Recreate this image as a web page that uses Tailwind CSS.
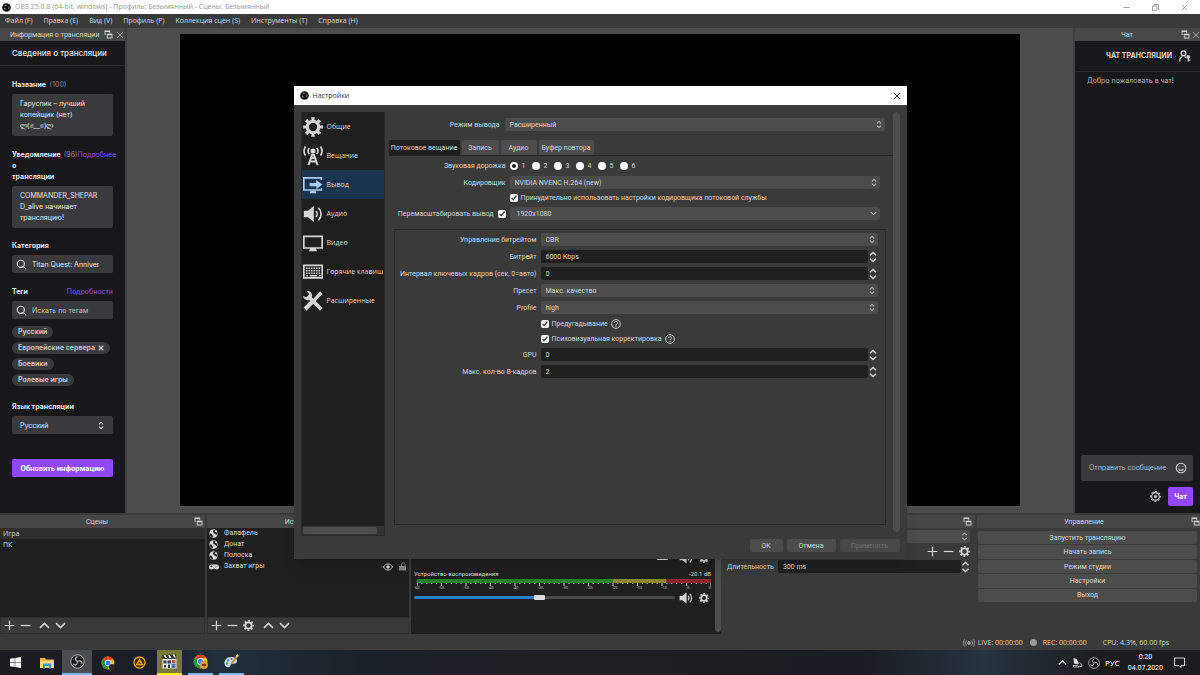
<!DOCTYPE html>
<html lang="ru">
<head>
  <meta charset="UTF-8" />
  <meta name="viewport" content="width=device-width, initial-scale=1.0" />
  <title>OBS 25.0.8 - Настройки</title>
  <script src="https://cdn.jsdelivr.net/npm/@tailwindcss/browser@4"></script>
</head>
<body class="relative flex min-h-screen flex-col overflow-x-hidden bg-[#3a3a3a] font-['Open_Sans','Noto_Sans',sans-serif] text-[7px] leading-[10px] text-[#d6d6d6]">

  <!-- Icon sprite -->
  <svg class="hidden" aria-hidden="true">
    <symbol id="i-obs" viewBox="0 0 24 24">
      <circle cx="12" cy="12" r="11.5" fill="#111" />
      <g fill="#777">
        <path d="M11 3.5a5 5 0 0 0-3.6 6.6 5.4 5.4 0 0 1 5.4-2.2A4.6 4.6 0 0 0 11 3.5z" />
        <path d="M4.5 16a5 5 0 0 0 7.4-.2 5.4 5.4 0 0 1-4.6-3.6A4.6 4.6 0 0 0 4.5 16z" />
        <path d="M20 15.5a5 5 0 0 0-3.5-6.5 5.4 5.4 0 0 1-.8 5.8 4.6 4.6 0 0 0 4.3.7z" />
      </g>
    </symbol>
    <symbol id="i-obs-line" viewBox="0 0 24 24">
      <circle cx="12" cy="12" r="10.8" fill="#1c1c1e" stroke="#c4c4c4" stroke-width="1.4" />
      <g fill="none" stroke="#b8b8b8" stroke-width="2" stroke-linecap="round">
        <path d="M11.500 4.500c-3 1-3.500 4-1.500 6.300" />
        <path d="M5.700 16.200c2.500 2 5.300.9 6.200-2.100" />
        <path d="M19 15.300c.5-3.100-1.800-5-4.900-4.300" />
      </g>
      <circle cx="12" cy="12" r="1.600" fill="#b8b8b8" />
    </symbol>
    <symbol id="i-gear" viewBox="0 0 24 24">
      <circle cx="12" cy="12" r="6.900" fill="none" stroke="currentColor" stroke-width="3.800" />
      <circle cx="12" cy="12" r="10" fill="none" stroke="currentColor" stroke-width="3.600" pathLength="16" stroke-dasharray="1 1" stroke-dashoffset=".5" />
    </symbol>
    <symbol id="i-popout" viewBox="0 0 16 16">
      <path d="M1 1h10v2.500H1zM1 3h1.500v5H1zM1 7h3v1.500H1zM9.500 3H11v3H9.500z" fill="currentColor" />
      <path d="M5 6.500h10V15H5zm1.500 3v4h7v-4z" fill="currentColor" fill-rule="evenodd" />
    </symbol>
    <symbol id="i-x" viewBox="0 0 16 16"><path d="M2 2l12 12M14 2L2 14" stroke="currentColor" stroke-width="1.800" fill="none" /></symbol>
    <symbol id="i-plus" viewBox="0 0 16 16"><path d="M8 1v14M1 8h14" stroke="currentColor" stroke-width="1.800" /></symbol>
    <symbol id="i-minus" viewBox="0 0 16 16"><path d="M1 8h14" stroke="currentColor" stroke-width="1.800" /></symbol>
    <symbol id="i-up" viewBox="0 0 16 16"><path d="M1.500 11.500L8 5l6.500 6.500" stroke="currentColor" stroke-width="2.200" fill="none" /></symbol>
    <symbol id="i-down" viewBox="0 0 16 16"><path d="M1.500 4.500L8 11l6.500-6.500" stroke="currentColor" stroke-width="2.200" fill="none" /></symbol>
    <symbol id="i-updown" viewBox="0 0 10 14"><path d="M1.500 5L5 1.800 8.500 5M1.500 9L5 12.200 8.500 9" stroke="currentColor" stroke-width="1.700" fill="none" /></symbol>
    <symbol id="i-speaker" viewBox="0 0 24 20">
      <path d="M1 6h5l7-5.500v19L6 14H1z" fill="currentColor" />
      <path d="M15.500 6.500a5 5 0 0 1 0 7M18.500 2.500a10.500 10.500 0 0 1 0 15" stroke="currentColor" stroke-width="2" fill="none" />
    </symbol>
    <symbol id="i-globe" viewBox="0 0 16 16">
      <circle cx="8" cy="8" r="7.500" fill="#dcdcdc" />
      <path d="M8.500 1l3 .8-1 2.700 2.500 1.500 2-.5.3 3.500-2.800 1.500-1.500-2-2.500-1-1.500-3zM1 7.500l3.500 1 1.500 2.500 1.500 1-.5 3-2.500-1L1.500 11z" fill="#1f1f1f" />
    </symbol>
    <symbol id="i-search" viewBox="0 0 16 16"><circle cx="7" cy="7" r="5.200" fill="none" stroke="currentColor" stroke-width="1.600" /><path d="M10.800 10.800L15 15" stroke="currentColor" stroke-width="1.600" /></symbol>
    <symbol id="i-help" viewBox="0 0 16 16">
      <circle cx="8" cy="8" r="7" fill="none" stroke="currentColor" stroke-width="1.500" />
      <path d="M5.600 6.400a2.400 2.400 0 1 1 3.700 2c-.9.600-1.300.9-1.300 1.800M8 11.300v1.600" fill="none" stroke="currentColor" stroke-width="1.500" />
    </symbol>
    <symbol id="i-chrome" viewBox="0 0 24 24">
      <circle cx="12" cy="12" r="11" fill="#fbc116" />
      <path d="M12 12L2.500 6.500A11 11 0 0 1 21.500 6.500H12z" fill="#e33b2e" />
      <path d="M2.500 6.500A11 11 0 0 0 11 23l5-9-4-2z" fill="#229342" />
      <circle cx="12" cy="12" r="5.500" fill="#fff" />
      <circle cx="12" cy="12" r="4.200" fill="#3b7ded" />
    </symbol>
  </svg>

  <!-- Window title -->
  <header class="flex h-[14px] items-center bg-white pr-3 pl-[2px] text-[#999]">
    <svg class="mr-1 size-[9px]"><use href="#i-obs" /></svg>
    <h1 class="flex-1">OBS 25.0.8 (64-bit, windows) - Профиль: Безымянный - Сцены: Безымянный</h1>
    <div class="flex items-center gap-[22px] text-[#8a8a8a]">
      <button aria-label="Свернуть"><svg class="size-[7px]"><use href="#i-minus" /></svg></button>
      <button aria-label="Развернуть"><svg class="size-[7px]" viewBox="0 0 14 14" fill="none" stroke="currentColor" stroke-width="1.500"><path d="M1 4h9v9H1zM4 4V1h9v9h-3" /></svg></button>
      <button aria-label="Закрыть"><svg class="size-[7px]"><use href="#i-x" /></svg></button>
    </div>
  </header>

  <nav class="flex h-[14px] items-center gap-[11px] px-[5px]">
    <a href="#">Файл (F)</a>
    <a href="#">Правка (E)</a>
    <a href="#">Вид (V)</a>
    <a href="#">Профиль (P)</a>
    <a href="#">Коллекция сцен (S)</a>
    <a href="#">Инструменты (T)</a>
    <a href="#">Справка (H)</a>
  </nav>

  <main class="flex flex-1 bg-[#4c4c4c]">
    <!-- Stream info -->
    <aside class="flex w-[125px] flex-col bg-[#18181b]">
      <div class="flex h-[13px] items-center gap-[3px] bg-[#484848] pr-px pl-[10px] font-[Roboto,sans-serif]">
        <h2 class="flex-1 whitespace-nowrap">Информация о трансляции</h2>
        <svg class="size-[9px]"><use href="#i-popout" /></svg>
        <svg class="size-[8px] text-[#aaa]"><use href="#i-x" /></svg>
      </div>
      <form class="flex flex-col font-[Inter,Roboto,sans-serif] text-[7px] leading-[11px] text-[#e6e6e9]">
        <h3 class="h-[25px] border-b border-[#2c2c30] px-[12px] text-[8px] leading-[25px] font-medium whitespace-nowrap">Сведения о трансляции</h3>
        <div class="flex flex-col px-[12px] pt-[13px]">
          <label for="name" class="mb-1 font-bold">Название <span class="pl-[2px] font-normal text-[#8a8a90]">(100)</span></label>
          <textarea id="name" class="h-[42px] w-full resize-none overflow-hidden rounded-[2px] bg-[#3a3a3d] px-[8px] py-[4px]">Гаруспик – лучший копейщик (нет) ლ(ಠ__ಠ)ლ</textarea>

          <div class="mt-[13px] mb-1 flex h-[33px] whitespace-nowrap">
            <label for="notify" class="font-bold">Уведомление<br />о<br />трансляции</label>
            <span class="pl-[3px] text-[#8a8a90]">(96)</span>
            <a href="#" class="text-[#8a4ae8]">Подробнее</a>
          </div>
          <textarea id="notify" class="h-[42px] w-full resize-none overflow-hidden rounded-[2px] bg-[#3a3a3d] py-[4px] pr-[13px] pl-[8px] wrap-break-word">COMMANDER_SHEPARD_alive начинает трансляцию!</textarea>

          <label for="cat" class="mt-[12px] mb-1 font-bold">Категория</label>
          <div class="flex h-[18px] items-center gap-[5px] rounded-[2px] bg-[#3a3a3d] px-[4px]">
            <svg class="size-[11px] shrink-0"><use href="#i-search" /></svg>
            <input id="cat" value="Titan Quest: Anniversary Edition" class="mr-[10px] min-w-0 flex-1 outline-none" />
          </div>

          <div class="mt-[13px] mb-1 flex justify-between">
            <label for="tags" class="font-bold">Теги</label>
            <a href="#" class="text-[#8a4ae8]">Подробности</a>
          </div>
          <div class="flex h-[18px] items-center gap-[5px] rounded-[2px] bg-[#3a3a3d] px-[4px]">
            <svg class="size-[11px] shrink-0"><use href="#i-search" /></svg>
            <input id="tags" placeholder="Искать по тегам" class="min-w-0 flex-1 outline-none placeholder:text-[#c0c0c4]" />
          </div>
          <ul class="mt-[7px] flex flex-col items-start gap-1 leading-[12px] font-semibold whitespace-nowrap text-[#cfcfd3]">
            <li class="rounded-full bg-[#3a3a3d] px-[6px]">Русский</li>
            <li class="flex items-center gap-[3px] rounded-full bg-[#3a3a3d] px-[6px]">Европейские сервера <svg class="size-[6px]" viewBox="0 0 16 16"><path d="M2 2l12 12M14 2L2 14" stroke="currentColor" stroke-width="3" /></svg></li>
            <li class="rounded-full bg-[#3a3a3d] px-[6px]">Боевики</li>
            <li class="rounded-full bg-[#3a3a3d] px-[6px]">Ролевые игры</li>
          </ul>

          <label for="lang" class="mt-[15px] mb-1 font-bold">Язык трансляции</label>
          <div class="relative">
            <select id="lang" class="h-[18px] w-full appearance-none rounded-[2px] bg-[#3a3a3d] px-[8px]"><option>Русский</option></select>
            <svg class="pointer-events-none absolute top-[5px] right-[9px] h-[9px] w-[6px]"><use href="#i-updown" /></svg>
          </div>
          <button type="button" class="mt-[25px] h-[18px] rounded-[2px] bg-[#9147ff] font-bold whitespace-nowrap text-white">Обновить информацию</button>
        </div>
      </form>
    </aside>

    <!-- Preview -->
    <section class="flex flex-1 border-x-2 border-[#404040] px-[53px] pt-[6px] pb-[7px]" aria-label="Предпросмотр">
      <div class="flex-1 bg-black"></div>
    </section>

    <!-- Chat -->
    <aside class="flex w-[125px] flex-col bg-[#18181b]">
      <div class="flex h-[13px] items-center gap-[2px] bg-[#484848] font-[Roboto,sans-serif]">
        <h2 class="flex-1 text-center">Чат</h2>
        <svg class="size-[9px]"><use href="#i-popout" /></svg>
        <svg class="size-[8px] text-[#aaa]"><use href="#i-x" /></svg>
      </div>
      <div class="flex flex-1 flex-col font-[Inter,Roboto,sans-serif] text-[7px]">
        <div class="flex h-[31px] items-center justify-end gap-[7px] border-b border-[#2c2c30] pr-[9px]">
          <h3 class="font-bold whitespace-nowrap">ЧАТ ТРАНСЛЯЦИИ</h3>
          <svg class="size-[12px]" viewBox="0 0 20 20" fill="none" stroke="currentColor" stroke-width="2"><circle cx="7.500" cy="5.500" r="4" /><path d="M5 9v2.500l-3.500 3V19M10 9v2.500l2.500 2" /><circle cx="15.500" cy="11.500" r="2" fill="currentColor" /><path d="M15.500 13v6M15.500 17H19" /></svg>
        </div>
        <p class="flex-1 px-3 pt-1 text-[#adadb8]">Добро пожаловать в чат!</p>
        <div class="mr-[7px] ml-[6px] flex h-[26px] items-center rounded-[2px] bg-[#3a3a3d] pr-[6px] pl-[8px]">
          <input aria-label="Отправить сообщение" placeholder="Отправить сообщение" class="min-w-0 flex-1 outline-none placeholder:text-[#b8b8bc]" />
          <svg class="size-[12px]" viewBox="0 0 20 20" fill="none" stroke="currentColor" stroke-width="1.800"><circle cx="10" cy="10" r="8" /><path d="M6 11c1 4 7 4 8 0M7 7v1.500M13 7v1.500" /></svg>
        </div>
        <div class="flex items-center justify-end gap-[7px] pt-[6px] pr-[7px] pb-[7px]">
          <button aria-label="Настройки чата"><svg class="size-[11px]" viewBox="0 0 20 20" fill="none" stroke="currentColor"><circle cx="10" cy="10" r="7" stroke-width="2" /><circle cx="10" cy="10" r="8.800" stroke-width="2" pathLength="16" stroke-dasharray="1 1" stroke-dashoffset=".5" /><circle cx="10" cy="10" r="2.300" fill="currentColor" /></svg></button>
          <button class="h-[19px] w-[25px] rounded-[2px] bg-[#9147ff] font-bold text-white">Чат</button>
        </div>
      </div>
    </aside>
  </main>

  <!-- Docks -->
  <div class="grid h-[121px] grid-cols-[205fr_202fr_310fr_252fr_223fr] gap-[2px] pt-[2px] font-[Roboto,sans-serif]">
    <section class="flex flex-col">
      <div class="flex h-[13px] items-center bg-[#464646] pr-[2px]">
        <h2 class="flex-1 text-center">Сцены</h2>
        <svg class="size-[9px]"><use href="#i-popout" /></svg>
      </div>
      <ul class="flex-1 bg-[#1f1f1f] leading-[11px] font-['Open_Sans',sans-serif]">
        <li class="bg-[#2f2f2f] px-[3px]">Игра</li>
        <li class="px-[3px]">ПК</li>
      </ul>
      <div class="flex h-[17px] items-center gap-[5px] border border-[#303030] px-[3px]">
        <button aria-label="Добавить"><svg class="size-[11px]"><use href="#i-plus" /></svg></button>
        <button aria-label="Удалить"><svg class="size-[11px]"><use href="#i-minus" /></svg></button>
        <button class="pl-[3px]" aria-label="Вверх"><svg class="size-[11px]"><use href="#i-up" /></svg></button>
        <button aria-label="Вниз"><svg class="size-[11px]"><use href="#i-down" /></svg></button>
      </div>
    </section>

    <section class="flex flex-col">
      <div class="flex h-[13px] items-center bg-[#464646] pr-[2px]">
        <h2 class="flex-1 text-center">Источники</h2>
        <svg class="size-[9px]"><use href="#i-popout" /></svg>
      </div>
      <ul class="flex-1 bg-[#1f1f1f] px-[2px] leading-[11px]">
        <li class="flex items-center gap-[6px]"><svg class="size-[9px]"><use href="#i-globe" /></svg>Фалафель</li>
        <li class="flex items-center gap-[6px]"><svg class="size-[9px]"><use href="#i-globe" /></svg>Донат</li>
        <li class="flex items-center gap-[6px]"><svg class="size-[9px]"><use href="#i-globe" /></svg>Полоска</li>
        <li class="flex items-center gap-[5px]">
          <svg class="h-[6px] w-[10px]" viewBox="0 0 20 12"><path d="M5 1h10a5 5 0 0 1 0 10c-2 0-3-2-5-2s-3 2-5 2A5 5 0 0 1 5 1z" fill="#dcdcdc" /><path d="M3 5h4M5 3v4M13 6.500h1.500M15.500 4H17" stroke="#1f1f1f" stroke-width="1.500" /></svg>
          <span class="flex-1">Захват игры</span>
          <svg class="h-[8px] w-[10px]" viewBox="0 0 20 16" fill="none" stroke="currentColor" stroke-width="2"><path d="M1 8c4-8 14-8 18 0-4 8-14 8-18 0z" /><circle cx="10" cy="8" r="2.500" fill="currentColor" /></svg>
          <svg class="size-[9px] text-[#888]" viewBox="0 0 18 18"><path d="M2 8h14v9H2z" fill="currentColor" /><path d="M7 8V5a3.500 3.500 0 0 1 7 0v3" fill="none" stroke="currentColor" stroke-width="2" /></svg>
        </li>
      </ul>
      <div class="flex h-[17px] items-center gap-[5px] border border-[#303030] px-[3px]">
        <button aria-label="Добавить"><svg class="size-[11px]"><use href="#i-plus" /></svg></button>
        <button aria-label="Удалить"><svg class="size-[11px]"><use href="#i-minus" /></svg></button>
        <button aria-label="Свойства"><svg class="size-[11px]"><use href="#i-gear" /></svg></button>
        <button class="pl-[4px]" aria-label="Вверх"><svg class="size-[11px]"><use href="#i-up" /></svg></button>
        <button aria-label="Вниз"><svg class="size-[11px]"><use href="#i-down" /></svg></button>
      </div>
    </section>

    <section class="flex flex-col">
      <h2 class="h-[13px] bg-[#464646] text-center leading-[13px]">Микшер аудио</h2>
      <div class="flex flex-1 bg-[#1f1f1f]">
        <div id="mixer" class="flex-1 pr-[4px] pl-[3px]"></div>
        <div class="mb-[2px] w-[6px] rounded-full bg-[#4d4d4d]"></div>
      </div>
    </section>

    <section class="flex flex-col">
      <div class="flex h-[13px] items-center bg-[#464646] pr-[3px]">
        <h2 class="flex-1 text-center">Переходы между сценами</h2>
        <svg class="size-[9px]"><use href="#i-popout" /></svg>
      </div>
      <div class="flex flex-col pt-[2px] pr-[5px] pl-[4px]">
        <div class="relative">
          <select aria-label="Переход" class="block h-[13px] w-full appearance-none rounded-[2px] bg-[#4c4c4c] px-[5px]"><option>Затухание</option></select>
          <svg class="pointer-events-none absolute top-[2px] right-[2px] h-[9px] w-[7px] text-[#aaa]"><use href="#i-updown" /></svg>
        </div>
        <div class="flex h-[17px] items-center justify-end gap-[5px]">
          <button aria-label="Добавить переход"><svg class="size-[11px]"><use href="#i-plus" /></svg></button>
          <button aria-label="Удалить переход"><svg class="size-[11px]"><use href="#i-minus" /></svg></button>
          <button aria-label="Свойства перехода"><svg class="size-[11px]"><use href="#i-gear" /></svg></button>
        </div>
        <div class="flex h-[13px] items-center">
          <label for="dur" class="mr-1">Длительность</label>
          <input id="dur" value="300 ms" class="h-[13px] min-w-0 flex-1 rounded-[2px] bg-[#1f1f1f] px-[5px] outline-none" />
          <svg class="h-[12px] w-[9px]"><use href="#i-updown" /></svg>
        </div>
      </div>
    </section>

    <section class="flex flex-col">
      <div class="flex h-[13px] items-center bg-[#464646]">
        <h2 class="flex-1 text-center">Управление</h2>
        <svg class="size-[9px]"><use href="#i-popout" /></svg>
      </div>
      <div class="flex h-[74px] flex-col gap-px pt-[3px] pr-[3px] pl-px">
        <button class="flex-1 rounded-[2px] bg-[#4c4c4c]">Запустить трансляцию</button>
        <button class="flex-1 rounded-[2px] bg-[#4c4c4c]">Начать запись</button>
        <button class="flex-1 rounded-[2px] bg-[#4c4c4c]">Режим студии</button>
        <button class="flex-1 rounded-[2px] bg-[#4c4c4c]">Настройки</button>
        <button class="flex-1 rounded-[2px] bg-[#4c4c4c]">Выход</button>
      </div>
    </section>
  </div>

  <!-- Status bar -->
  <div class="flex h-[16px] items-center justify-end pt-px pr-[31px]">
    <svg class="mr-[3px] h-[8px] w-[12px] text-[#999]" viewBox="0 0 24 16" fill="none" stroke="currentColor" stroke-width="2"><circle cx="12" cy="8" r="3" fill="currentColor" /><path d="M7 3a7 7 0 0 0 0 10M17 3a7 7 0 0 1 0 10M3 1a11 11 0 0 0 0 14M21 1a11 11 0 0 1 0 14" /></svg>
    <span>LIVE: 00:00:00</span>
    <span class="mr-[6px] ml-[7px] size-[7px] rounded-full bg-[#999]"></span>
    <span>REC: 00:00:00</span>
    <span class="ml-4">CPU: 4.3%, 60.00 fps</span>
  </div>

  <!-- Taskbar -->
  <footer class="flex h-[25px] items-stretch bg-[linear-gradient(to_right,#1b1c20_0%,#1b1f27_13%,#22303b_18%,#1b2129_30%,#1e1f24_45%,#1a1d23_72%,#27333f_82%,#1c1c1e_92%)] px-px text-white">
    <button class="flex w-[28px] items-center justify-center" aria-label="Пуск"><svg class="size-[11px]" viewBox="0 0 20 20" fill="#fff"><path d="M0 3l8.500-1.200V9.500H0zM9.500 1.600L20 0v9.500H9.500zM0 10.500h8.500v7.700L0 17zM9.500 10.500H20V20L9.500 18.400z" /></svg></button>
    <button class="ml-1 flex w-[28px] items-center justify-center" aria-label="Проводник"><svg class="h-[12px] w-[14px]" viewBox="0 0 28 24"><path d="M0 2h10l2 3h16v17H0z" fill="#e9b440" /><path d="M0 8h28v14H0z" fill="#fbdc72" /><path d="M6 13h16v10h-4v-5h-8v5H6z" fill="#3d97dc" /></svg></button>
    <button class="ml-px flex w-[30px] items-center justify-center border-b-2 border-[#76b9ed] bg-[#4a4c50]" aria-label="OBS"><svg class="size-[15px]"><use href="#i-obs-line" /></svg></button>
    <button class="ml-px flex w-[30px] items-center justify-center" aria-label="Chrome"><svg class="size-[14px]"><use href="#i-chrome" /><circle cx="11" cy="11" r="3" fill="#332826" /></svg></button>
    <button class="ml-px flex w-[30px] items-center justify-center" aria-label="AIMP"><svg class="size-[13px]" viewBox="0 0 24 24"><circle cx="12" cy="12" r="11.500" fill="#f6a11a" /><circle cx="12" cy="12" r="9" fill="#3a2c16" /><path d="M12 4l7.500 13h-15zm0 5.500l-3 5h6z" fill="#f6a11a" fill-rule="evenodd" /></svg></button>
    <button class="ml-[3px] flex w-[25px] items-center justify-center border-b-2 border-[#f6ee1a] bg-[#77783a]" aria-label="Видеоплеер"><svg class="size-[15px]" viewBox="0 0 30 30"><path d="M1 10h28v19H1z" fill="#eee" /><path d="M1 2l27-1v8H1z" fill="#222" /><path d="M3 2h4l3 6H6zM12 2h4l3 6h-4zM21 1h4l3 6h-4z" fill="#fff" /><path d="M3 13h6v6H3zM11 13h7v6h-7zM4 22h4v5H4zM12 21h4v7h-4z" fill="#35394a" /><path d="M20 12h7v6h-7z" fill="#bb5548" /><path d="M19 19h8v9h-8z" fill="#4a70b8" /></svg></button>
    <button class="ml-[6px] flex w-[25px] items-center justify-center border-b-2 border-[#76b9ed]" aria-label="Chrome"><svg class="size-[15px]"><use href="#i-chrome" /><circle cx="11" cy="11" r="4" fill="#d99a3c" /><path d="M9 10h4v2H9z" fill="#71401d" /></svg></button>
    <button class="ml-[6px] flex w-[25px] items-center justify-center border-b-2 border-[#76b9ed]" aria-label="Paint"><svg class="size-[15px]" viewBox="0 0 30 30"><path d="M14 6C5 6 0 13 1 20c1 6 8 8 11 5 2-2 0-4 3-5 4-1 11 0 11-6 0-5-5-8-12-8z" fill="#c5dff0" /><circle cx="8" cy="13" r="2.500" fill="#3d87d6" /><circle cx="6" cy="19" r="2.500" fill="#49a64b" /><circle cx="15" cy="10" r="2.200" fill="#d8483c" /><path d="M13 19L25 3l3 2-12 16z" fill="#c98a3f" /><path d="M23 4l4-4 3 4-4 3z" fill="#e8c78c" /></svg></button>
    <div class="ml-auto flex items-center pr-[14px]">
      <svg class="size-[9px]"><use href="#i-up" /></svg>
      <svg class="ml-[5px] size-[11px]" viewBox="0 0 22 22"><path d="M3 2c6 1 11 6 10 13l-9-2zM10 10l5 4" fill="#ddd" /><path d="M2 17h9l3 3H3zM15 11c3 1 5 4 5 8h-6" fill="none" stroke="#ddd" stroke-width="1.500" /></svg>
      <svg class="ml-[5px] size-[12px]"><use href="#i-obs-line" /></svg>
      <span class="ml-[5px] text-[8px]">РУС</span>
      <time class="ml-2 text-center font-[Roboto,sans-serif] text-[7px] leading-[11px]">0:20<br />04.07.2020</time>
      <svg class="ml-[11px] size-[11px]" viewBox="0 0 22 22" fill="none" stroke="#fff" stroke-width="1.600"><path d="M1 2h20v15h-7v4l-4-4H1z" /></svg>
    </div>
  </footer>

  <!-- Settings dialog -->
  <section role="dialog" aria-labelledby="dlg" class="absolute inset-x-0 top-[86px] mx-auto flex h-[473px] w-[613px] flex-col bg-[#3a3a3a] shadow-lg">
    <div class="flex h-[19px] items-center bg-white px-[6px] text-[#333]">
      <svg class="mr-[4px] size-[9px]"><use href="#i-obs" /></svg>
      <h2 id="dlg" class="flex-1">Настройки</h2>
      <button aria-label="Закрыть"><svg class="size-[8px]"><use href="#i-x" /></svg></button>
    </div>

    <div class="flex min-h-0 flex-1 pt-[7px] pr-[7px] pl-[7px]">
      <div class="flex h-[424px] w-[84px] flex-col border-x border-b border-[#2a2a2a] bg-[#1f1f1f]">
        <ul class="flex-1 whitespace-nowrap">
          <li><a href="#" class="flex h-[29px] items-center gap-[4px] px-px"><svg class="size-[20px] shrink-0"><use href="#i-gear" /></svg>Общие</a></li>
          <li><a href="#" class="flex h-[29px] items-center gap-[4px] px-px"><svg class="size-[20px] shrink-0" viewBox="0 0 24 24" fill="none" stroke="currentColor" stroke-width="2"><circle cx="12" cy="6" r="2" fill="currentColor" /><path d="M7.500 2.500a5.500 5.500 0 0 0 0 7M16.500 2.500a5.500 5.500 0 0 1 0 7M3 .5a10 10 0 0 0 0 11M21 .5a10 10 0 0 1 0 11" /><path d="M6.500 23L11 10.500h2L17.500 23M8.500 18.500h7M10 14.500h4" stroke-width="2.400" /></svg>Вещание</a></li>
          <li><a href="#" class="flex h-[29px] items-center gap-[4px] bg-[#1b3550] px-px"><svg class="size-[20px] shrink-0 text-[#a9cbed]" viewBox="0 0 24 24" fill="none" stroke="currentColor" stroke-width="2"><path d="M22 6V3.500H1V18h21v-2" /><path d="M8 9.500h8V6l7 5.500-7 5.500v-3.500H8z" fill="currentColor" stroke="none" /><path d="M8 22h8l-1-3H9z" fill="currentColor" stroke="none" /></svg>Вывод</a></li>
          <li><a href="#" class="flex h-[29px] items-center gap-[4px] px-px"><svg class="size-[20px] shrink-0"><use href="#i-speaker" /></svg>Аудио</a></li>
          <li><a href="#" class="flex h-[29px] items-center gap-[4px] px-px"><svg class="size-[20px] shrink-0" viewBox="0 0 24 24"><path d="M0 3h24v16H0zm2 2v12h20V5z" fill="currentColor" fill-rule="evenodd" /><path d="M9 18h6l2 4H7z" fill="currentColor" /></svg>Видео</a></li>
          <li><a href="#" class="flex h-[29px] items-center gap-[4px] px-px"><svg class="size-[20px] shrink-0" viewBox="0 0 24 24" fill="none" stroke="currentColor"><path d="M1 4h22v15H1z" stroke-width="2" /><path d="M3.500 7.500h17M3.500 10.500h17M3.500 13.500h17" stroke-width="2" stroke-dasharray="2 1" /><path d="M4 16.500h2M8 16.500h9M19 16.500h2" stroke-width="2" /></svg>Горячие клавиш</a></li>
          <li><a href="#" class="flex h-[29px] items-center gap-[4px] px-px"><svg class="size-[20px] shrink-0" viewBox="0 0 24 24" fill="none" stroke="currentColor"><path d="M22 2L13 11.500" stroke-width="4" /><path d="M11.500 12.500L2.500 21.500" stroke-width="5" /><path d="M7 7l15 15" stroke-width="4.500" /><path d="M5 0a5.500 5.500 0 1 1-5 6l4 1.500L7.500 4z" fill="currentColor" stroke="none" /></svg>Расширенные</a></li>
        </ul>
        <div class="h-[9px] bg-[#333] py-px pr-[7px] pl-px"><div class="h-full rounded-[2px] bg-[#4d4d4d]"></div></div>
      </div>

      <form class="ml-1 flex min-w-0 flex-1 flex-col pt-[6px] font-[Roboto,sans-serif]">
        <div class="flex h-[13px] items-center pr-[8px]">
          <label for="mode" class="w-[116px] pr-[5px] text-right">Режим вывода</label>
          <div class="relative flex-1">
            <select id="mode" class="block h-[13px] w-full appearance-none rounded-[2px] bg-[#4c4c4c] px-[5px]"><option>Расширенный</option></select>
            <svg class="pointer-events-none absolute top-[2px] right-[3px] h-[9px] w-[6px] text-[#bbb]"><use href="#i-updown" /></svg>
          </div>
        </div>

        <div class="mt-[9px] flex h-[16px] items-stretch gap-[2px] border-b border-[#222] whitespace-nowrap" role="tablist">
          <button type="button" role="tab" aria-selected="true" class="w-[71px] rounded-t-[2px] bg-[#1f1f1f]">Потоковое вещание</button>
          <button type="button" role="tab" class="w-[37px] rounded-t-[2px] bg-[#4c4c4c]">Запись</button>
          <button type="button" role="tab" class="w-[36px] rounded-t-[2px] bg-[#4c4c4c]">Аудио</button>
          <button type="button" role="tab" class="w-[55px] rounded-t-[2px] bg-[#4c4c4c]">Буфер повтора</button>
        </div>

        <div class="flex flex-col pt-[5px] pr-[13px]">
          <fieldset class="flex h-[13px] items-center">
            <span class="w-[121px] pr-[4px] text-right">Звуковая дорожка</span>
            <div id="tracks" class="flex items-center"></div>
          </fieldset>
          <div class="mt-[2px] flex h-[13px] items-center">
            <label for="enc" class="w-[121px] pr-[4px] text-right">Кодировщик</label>
            <div class="relative flex-1">
              <select id="enc" class="block h-[13px] w-full appearance-none rounded-[2px] bg-[#4c4c4c] px-[5px]"><option>NVIDIA NVENC H.264 (new)</option></select>
              <svg class="pointer-events-none absolute top-[2px] right-[3px] h-[9px] w-[6px] text-[#bbb]"><use href="#i-updown" /></svg>
            </div>
          </div>
          <label class="mt-[2px] flex h-[13px] items-center gap-[3px] pl-[121px]"><input type="checkbox" checked class="size-[8px] accent-white" />Принудительно использовать настройки кодировщика потоковой службы</label>
          <div class="mt-[3px] flex h-[13px] items-center">
            <label class="flex w-[121px] items-center justify-end gap-[4px] pr-[4px]">Перемасштабировать вывод<input type="checkbox" checked class="size-[8px] accent-white" /></label>
            <div class="relative flex-1">
              <select aria-label="Разрешение" class="block h-[13px] w-full appearance-none rounded-[2px] bg-[#4c4c4c] px-[7px]"><option>1920x1080</option></select>
              <svg class="pointer-events-none absolute top-[3px] right-[3px] size-[7px]"><use href="#i-down" /></svg>
            </div>
          </div>
        </div>

        <div class="mt-[9px] mr-[7px] ml-[5px] flex h-[296px] flex-col gap-[4px] border border-[#292929] pt-[3px] pr-[7px]">
          <div class="flex h-[13px] items-center">
            <label for="rate" class="w-[146px] pr-[4px] text-right">Управление битрейтом</label>
            <div class="relative flex-1">
              <select id="rate" class="block h-[13px] w-full appearance-none rounded-[2px] bg-[#4c4c4c] px-[5px]"><option>CBR</option></select>
              <svg class="pointer-events-none absolute top-[2px] right-[3px] h-[9px] w-[6px] text-[#bbb]"><use href="#i-updown" /></svg>
            </div>
          </div>
          <div class="flex h-[13px] items-center">
            <label for="bitrate" class="w-[146px] pr-[4px] text-right">Битрейт</label>
            <input id="bitrate" value="6000 Kbps" class="h-[13px] flex-1 rounded-[2px] bg-[#1f1f1f] px-[5px] outline-none" />
            <svg class="h-[12px] w-[10px]"><use href="#i-updown" /></svg>
          </div>
          <div class="flex h-[13px] items-center">
            <label for="keyint" class="w-[146px] pr-[4px] text-right whitespace-nowrap">Интервал ключевых кадров (сек, 0=авто)</label>
            <input id="keyint" value="0" class="h-[13px] flex-1 rounded-[2px] bg-[#1f1f1f] px-[5px] outline-none" />
            <svg class="h-[12px] w-[10px]"><use href="#i-updown" /></svg>
          </div>
          <div class="flex h-[13px] items-center">
            <label for="preset" class="w-[146px] pr-[4px] text-right">Пресет</label>
            <div class="relative flex-1">
              <select id="preset" class="block h-[13px] w-full appearance-none rounded-[2px] bg-[#4c4c4c] px-[5px]"><option>Макс. качество</option></select>
              <svg class="pointer-events-none absolute top-[2px] right-[3px] h-[9px] w-[6px] text-[#bbb]"><use href="#i-updown" /></svg>
            </div>
          </div>
          <div class="flex h-[13px] items-center">
            <label for="profile" class="w-[146px] pr-[4px] text-right">Profile</label>
            <div class="relative flex-1">
              <select id="profile" class="block h-[13px] w-full appearance-none rounded-[2px] bg-[#4c4c4c] px-[5px]"><option>high</option></select>
              <svg class="pointer-events-none absolute top-[2px] right-[3px] h-[9px] w-[6px] text-[#bbb]"><use href="#i-updown" /></svg>
            </div>
          </div>
          <label class="flex h-[11px] items-center gap-[3px] pl-[146px]"><input type="checkbox" checked class="size-[8px] accent-white" />Предугадывание <svg class="size-[10px]"><use href="#i-help" /></svg></label>
          <label class="flex h-[11px] items-center gap-[3px] pl-[146px]"><input type="checkbox" checked class="size-[8px] accent-white" />Психовизуальная корректировка <svg class="size-[10px]"><use href="#i-help" /></svg></label>
          <div class="flex h-[13px] items-center">
            <label for="gpu" class="w-[146px] pr-[4px] text-right">GPU</label>
            <input id="gpu" value="0" class="h-[13px] flex-1 rounded-[2px] bg-[#1f1f1f] px-[5px] outline-none" />
            <svg class="h-[12px] w-[10px]"><use href="#i-updown" /></svg>
          </div>
          <div class="flex h-[13px] items-center">
            <label for="bframes" class="w-[146px] pr-[4px] text-right">Макс. кол-во B-кадров</label>
            <input id="bframes" value="2" class="h-[13px] flex-1 rounded-[2px] bg-[#1f1f1f] px-[5px] outline-none" />
            <svg class="h-[12px] w-[10px]"><use href="#i-updown" /></svg>
          </div>
        </div>
      </form>
      <div class="mb-[7px] w-[7px] rounded-full bg-[#4d4d4d]"></div>
    </div>

    <div class="flex h-[20px] justify-end gap-[4px] pr-[7px] pb-[7px] font-[Roboto,sans-serif]">
      <button class="w-[33px] rounded-[2px] bg-[#4c4c4c]">OK</button>
      <button class="w-[49px] rounded-[2px] bg-[#4c4c4c]">Отмена</button>
      <button disabled class="w-[60px] rounded-[2px] bg-[#484848] text-[#6e6e6e]">Применить</button>
    </div>
  </section>

  <script>
    // Audio mixer channels
    const channels = [
      { name: 'Mic/Aux', db: '0.0 dB', volume: 97 },
      { name: 'Устройство воспроизведения', db: '-20.1 dB', volume: 48 },
    ];
    const marks = [-60, -55, -50, -45, -40, -35, -30, -25, -20, -15, -10, -5, 0];

    document.getElementById('mixer').innerHTML = channels.map(ch => `
      <div class="h-[40px] pt-px">
        <div class="flex h-[10px] items-center justify-between text-[6px]"><span>${ch.name}</span><span>${ch.db}</span></div>
        <div class="ml-[3px] flex h-[4px]">
          <div class="w-2/3 bg-[#218321]"></div>
          <div class="w-[18%] bg-[#8c862c]"></div>
          <div class="flex-1 bg-[#8c2529]"></div>
        </div>
        <svg class="block h-[3px] w-full pl-[3px] text-[#aaa]" viewBox="0 0 120 3" preserveAspectRatio="none">
          ${Array.from({ length: 61 }, (_, i) => `<path d="M${i * 2} 0v${i % 5 ? 1 : 3}" stroke="currentColor" stroke-width=".5" />`).join('')}
        </svg>
        <div class="flex h-[4px] justify-between text-[4px] leading-[4px] text-[#bbb]">${marks.map(m => `<span>${m}</span>`).join('')}</div>
        <div class="flex h-[15px] items-center">
          <input type="range" aria-label="${ch.name}" value="${ch.volume}" style="background: linear-gradient(to right, #2f7fd1 ${ch.volume}%, #4c4c4c ${ch.volume}%)" class="h-[3px] min-w-0 flex-1 appearance-none rounded-full [&::-webkit-slider-thumb]:h-[5px] [&::-webkit-slider-thumb]:w-[11px] [&::-webkit-slider-thumb]:appearance-none [&::-webkit-slider-thumb]:rounded-[1px] [&::-webkit-slider-thumb]:bg-[#dcdcdc]" />
          <svg class="ml-[4px] h-[12px] w-[14px]"><use href="#i-speaker" /></svg>
          <svg class="mr-[2px] ml-[6px] size-[10px]"><use href="#i-gear" /></svg>
        </div>
      </div>
    `).join('');

    // Audio track radios
    document.getElementById('tracks').innerHTML = [1, 2, 3, 4, 5, 6].map(n => `
      <label class="flex w-[22px] items-center gap-[4px]"><input type="radio" name="track" ${n === 1 ? 'checked' : ''} class="size-[8px] appearance-none rounded-full border-2 border-white bg-white checked:bg-[#1f1f1f]" />${n}</label>
    `).join('');
  </script>
</body>
</html>
